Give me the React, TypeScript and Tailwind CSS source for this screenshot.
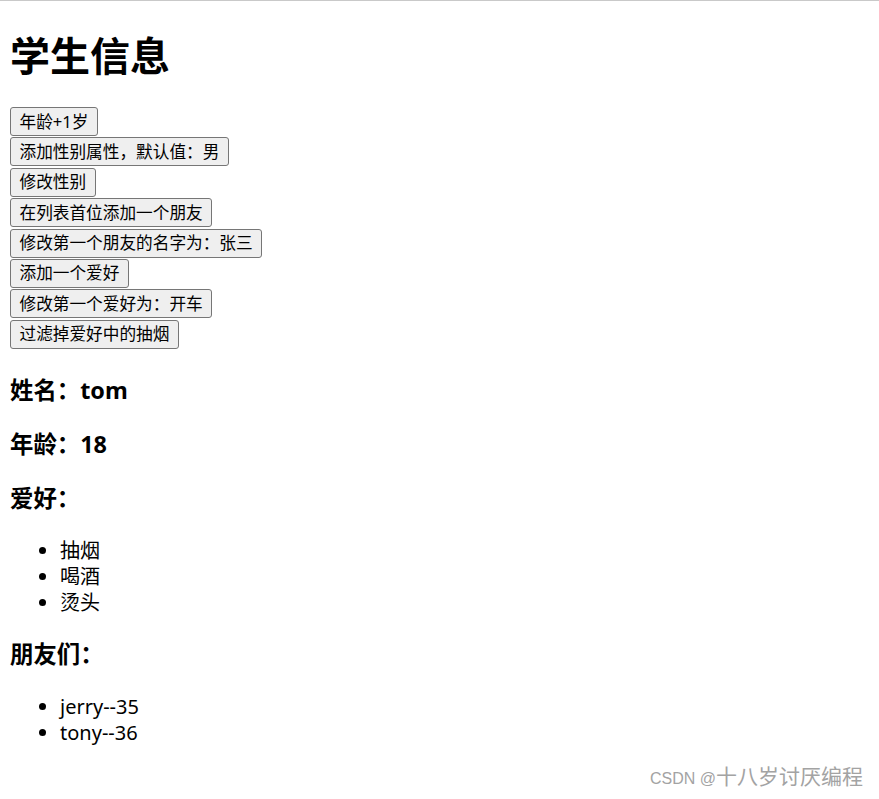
import React, { useState } from 'react';

type Friend = { name: string; age: number };

const font = { fontFamily: '"Noto Sans", "Noto Sans CJK SC", sans-serif' };

function App() {
  const [person, setPerson] = useState<{ name: string; age: number; sex?: string }>({ name: 'tom', age: 18 });
  const [hobbies, setHobbies] = useState<string[]>(['抽烟', '喝酒', '烫头']);
  const [friends, setFriends] = useState<Friend[]>([
    { name: 'jerry', age: 35 },
    { name: 'tony', age: 36 },
  ]);

  const actions: [string, () => void][] = [
    ['年龄+1岁', () => setPerson({ ...person, age: person.age + 1 })],
    ['添加性别属性，默认值：男', () => setPerson({ ...person, sex: '男' })],
    ['修改性别', () => setPerson({ ...person, sex: person.sex === '男' ? '女' : '男' })],
    ['在列表首位添加一个朋友', () => setFriends([{ name: 'jack', age: 70 }, ...friends])],
    ['修改第一个朋友的名字为：张三', () => setFriends(friends.map((f, i) => (i === 0 ? { ...f, name: '张三' } : f)))],
    ['添加一个爱好', () => setHobbies([...hobbies, '学习'])],
    ['修改第一个爱好为：开车', () => setHobbies(hobbies.map((h, i) => (i === 0 ? '开车' : h)))],
    ['过滤掉爱好中的抽烟', () => setHobbies(hobbies.filter((h) => h !== '抽烟'))],
  ];

  return (
    <div className="relative min-h-[799px] w-full bg-white text-black border-t border-[#c9c9c9]" style={font}>
      <div className="px-[10px] pb-[40px]">
        <h1 className="mt-[28px] text-[40px] leading-[53px] font-bold">学生信息</h1>

        <div className="mt-[25px] flex flex-col items-start">
          {actions.map(([label, onClick]) => (
            <div key={label} className="h-[30.4px]">
              <button
                onClick={onClick}
                className="h-[29px] px-[8.5px] text-[16.67px] leading-[22px] bg-[#efefef] border border-[#767676] rounded-[3px] text-black hover:bg-[#e5e5e5]"
              >
                {label}
              </button>
            </div>
          ))}
        </div>

        <h3 className="mt-[24.5px] text-[23.4px] leading-[31px] font-bold">姓名：{person.name}</h3>
        <h3 className="mt-[23.4px] text-[23.4px] leading-[31px] font-bold">年龄：{person.age}</h3>
        {person.sex && (
          <h3 className="mt-[23.4px] text-[23.4px] leading-[31px] font-bold">性别：{person.sex}</h3>
        )}
        <h3 className="mt-[23.4px] text-[23.4px] leading-[31px] font-bold">爱好：</h3>
        <ul className="mt-[23.4px] list-disc pl-[50px] text-[20px] leading-[26px]">
          {hobbies.map((h) => (
            <li key={h}>{h}</li>
          ))}
        </ul>

        <h3 className="mt-[23.4px] text-[23.4px] leading-[31px] font-bold">朋友们：</h3>
        <ul className="mt-[23.4px] list-disc pl-[50px] text-[20px] leading-[26px]">
          {friends.map((f) => (
            <li key={f.name}>
              {f.name}--{f.age}
            </li>
          ))}
        </ul>
      </div>

      {/* watermark */}
      <div className="absolute right-[16px] bottom-[8px] flex items-baseline text-[#a3a3a3] pointer-events-none select-none">
        <span className="text-[16px]" style={{ fontFamily: '"Liberation Sans", sans-serif' }}>
          CSDN @
        </span>
        <span className="text-[21px]" style={{ fontFamily: '"Noto Sans CJK SC", sans-serif' }}>
          十八岁讨厌编程
        </span>
      </div>
    </div>
  );
}

export default App;
